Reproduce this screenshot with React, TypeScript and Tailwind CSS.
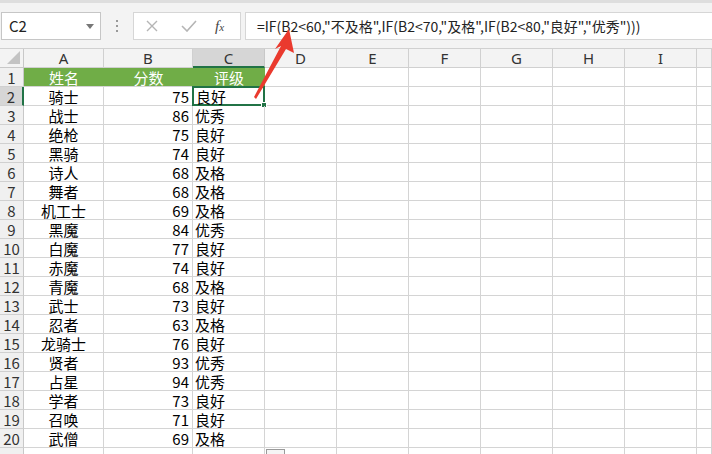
import React from "react";

const data: [string, number, string][] = [
  ["骑士", 75, "良好"],
  ["战士", 86, "优秀"],
  ["绝枪", 75, "良好"],
  ["黑骑", 74, "良好"],
  ["诗人", 68, "及格"],
  ["舞者", 68, "及格"],
  ["机工士", 69, "及格"],
  ["黑魔", 84, "优秀"],
  ["白魔", 77, "良好"],
  ["赤魔", 74, "良好"],
  ["青魔", 68, "及格"],
  ["武士", 73, "良好"],
  ["忍者", 63, "及格"],
  ["龙骑士", 76, "良好"],
  ["贤者", 93, "优秀"],
  ["占星", 94, "优秀"],
  ["学者", 73, "良好"],
  ["召唤", 71, "良好"],
  ["武僧", 69, "及格"],
];

const cols = ["A", "B", "C", "D", "E", "F", "G", "H", "I", ""];
const gridCols = "grid grid-cols-[24px_80px_89px_72px_72px_72px_72px_72px_72px_72px_1fr]";
const font = "font-['Noto_Sans_CJK_SC','Noto_Sans',sans-serif]";

function Row({ n, children, sel }: { n: number; children: React.ReactNode; sel?: boolean }) {
  return (
    <div className={`${gridCols} h-[19px]`}>
      <div
        className={`h-[19px] border-b border-[#d0d0d0] flex items-center justify-center pt-[1px] text-[15px] leading-[16px] text-[#333] ${
          sel ? "bg-[#d6d6d6] border-r-2 border-r-[#217346]" : "bg-[#f0f0f0] border-r border-r-[#c8c8c8]"
        }`}
      >
        {n}
      </div>
      {children}
    </div>
  );
}

function Empty({ count }: { count: number }) {
  return (
    <>
      {Array.from({ length: count }).map((_, i) => (
        <div key={i} className="h-[19px] border-b border-r border-[#d4d4d4]" />
      ))}
    </>
  );
}

export default function App() {
  return (
    <div className={`w-[712px] h-[454px] overflow-hidden bg-white ${font} text-[15px] text-black relative`}>
      {/* toolbar */}
      <div className="h-[49px] bg-[#f3f3f3] border-t-[3px] border-[#dedede] border-b border-b-[#d0d0d0] flex items-start pt-[9px] pl-[1px]">
        <div className="w-[100px] h-[28px] bg-white border border-[#c6c6c6] flex items-center pl-[7px] pr-[6px] justify-between text-[15px] text-[#222]">
          <span>C2</span>
          <svg width="8" height="5" viewBox="0 0 8 5"><path d="M0 0h8L4 5z" fill="#777" /></svg>
        </div>
        <div className="w-[32px] h-[28px] flex flex-col items-center justify-center gap-[3px]">
          <span className="w-[2px] h-[2px] bg-[#999]" />
          <span className="w-[2px] h-[2px] bg-[#999]" />
          <span className="w-[2px] h-[2px] bg-[#999]" />
        </div>
        <div className="w-[108px] h-[28px] bg-white border border-[#d6d6d6] flex items-center pl-[12px]">
          <svg width="12" height="12" viewBox="0 0 12 12">
            <path d="M1 1l10 10M11 1L1 11" stroke="#b5b5b5" strokeWidth="1.4" />
          </svg>
          <svg width="16" height="12" viewBox="0 0 16 12" className="ml-[23px]">
            <path d="M1 6l5 5L15 1" stroke="#b5b5b5" strokeWidth="1.6" fill="none" />
          </svg>
          <span className="ml-[18px] font-['Liberation_Serif',serif] italic text-[15px] text-[#444] leading-none">
            f<span className="text-[11px]">x</span>
          </span>
        </div>
        <div className="ml-[4px] flex-1 h-[28px] bg-white border border-[#d6d6d6] border-r-0 flex items-center pl-[11px] text-[14px] text-[#222] whitespace-nowrap">
          =IF(B2&lt;60,"不及格",IF(B2&lt;70,"及格",IF(B2&lt;80,"良好","优秀")))
        </div>
      </div>

      {/* column headers */}
      <div className={`${gridCols} h-[19px] bg-[#f3f3f3]`}>
        <div className="border-r border-b border-[#c8c8c8] relative">
          <svg width="13" height="13" viewBox="0 0 13 13" className="absolute right-[3px] bottom-[3px]">
            <path d="M13 0V13H0z" fill="#c3c3c3" />
          </svg>
        </div>
        {cols.map((c, i) => (
          <div
            key={i}
            className={`flex items-center justify-center text-[15px] leading-[16px] text-[#333] font-['Noto_Sans',sans-serif] ${
              c === "C" ? "bg-[#d6d6d6] border-r border-r-[#c8c8c8] border-b-2 border-b-[#217346]" : "border-r border-b border-[#d0d0d0]"
            }`}
          >
            {c}
          </div>
        ))}
      </div>

      {/* row 1 header */}
      <Row n={1}>
        <div className="bg-[#70ad47] text-white border-b border-[#d4d4d4] flex items-center justify-center pt-[2px] leading-[16px]">姓名</div>
        <div className="bg-[#70ad47] text-white border-b border-[#d4d4d4] flex items-center justify-center pt-[2px] leading-[16px]">分数</div>
        <div className="bg-[#70ad47] text-white border-b border-[#d4d4d4] flex items-center justify-center pt-[2px] leading-[16px]">评级</div>
        <Empty count={8} />
      </Row>

      {data.map(([name, score, grade], i) => (
        <Row key={i} n={i + 2} sel={i === 0}>
          <div className="border-b border-r border-[#d4d4d4] flex items-center justify-center pt-[2px] leading-[16px]">{name}</div>
          <div className="border-b border-r border-[#d4d4d4] flex items-center justify-end pr-[3px] pt-[2px] leading-[16px]">{score}</div>
          <div
            className={`flex items-center pl-[2px] leading-[16px] relative ${
              i === 0 ? "border-2 border-[#217346] -mt-[1px] -ml-[1px] h-[20px] pt-[2px]" : "border-b border-r border-[#d4d4d4] pt-[2px]"
            }`}
          >
            {grade}
            {i === 0 && <span className="absolute -right-[4px] -bottom-[4px] w-[6px] h-[6px] bg-[#217346] border border-white" />}
          </div>
          <Empty count={8} />
        </Row>
      ))}

      {/* partial row 21 */}
      <div className={`${gridCols} h-[19px]`}>
        <div className="bg-[#f0f0f0] border-r border-[#c8c8c8]" />
        <div className="border-r border-[#d4d4d4]" />
        <div className="border-r border-[#d4d4d4]" />
        <div className="border-r border-[#d4d4d4] relative">
          <span className="absolute left-[73px] top-[1px] w-[19px] h-[14px] border border-[#9a9a9a] bg-[#f5f5f5]" />
        </div>
        {Array.from({ length: 7 }).map((_, i) => (
          <div key={i} className="border-r border-[#d4d4d4]" />
        ))}
      </div>

      {/* red arrow */}
      <svg width="712" height="454" className="absolute left-0 top-0 pointer-events-none">
        <polygon points="289,29 294,53 286,49 256,99 254,97 281,46 275,49" fill="#ea3a2e" />
      </svg>
    </div>
  );
}
